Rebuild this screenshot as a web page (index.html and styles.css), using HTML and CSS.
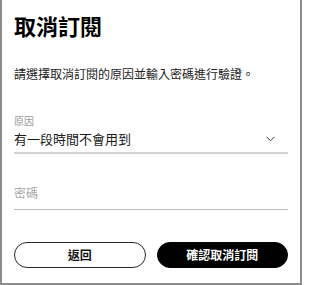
FILE: index.html
```html
<!DOCTYPE html>
<html lang="zh-Hant">
<head>
<meta charset="utf-8">
<link rel="stylesheet" href="styles.css">
</head>
<body>
<div class="dialog">
  <h1 class="title">取消訂閱</h1>
  <p class="desc">請選擇取消訂閱的原因並輸入密碼進行驗證。</p>
  <div class="field">
    <div class="label">原因</div>
    <div class="select">
      <span class="value">有一段時間不會用到</span>
      <svg class="chev" width="9" height="6" viewBox="0 0 9 6"><path d="M0.5 0.8 L4.5 4.8 L8.5 0.8" fill="none" stroke="#333" stroke-width="1"/></svg>
    </div>
  </div>
  <div class="pw">
    <input class="pw-input" type="password" placeholder="密碼">
  </div>
  <div class="actions">
    <button class="btn btn-outline">返回</button>
    <button class="btn btn-solid">確認取消訂閱</button>
  </div>
</div>
</body>
</html>
```
FILE: styles.css
```css
* { box-sizing: border-box; }
html, body { margin: 0; padding: 0; background: #fff; }
body { font-family: "Noto Sans CJK TC", "Noto Sans", sans-serif; }
.dialog {
  width: 302px;
  height: 285px;
  border: 2px solid #8c8c8c;
  border-top: 0;
  padding: 0 12px;
  display: flex;
  flex-direction: column;
}
.title {
  margin: 10px 0 0;
  font-size: 22px;
  line-height: 30px;
  font-weight: 700;
  color: #000;
}
.desc {
  margin: 25px 0 0;
  font-size: 12px;
  line-height: 18px;
  color: #222;
}
.field { margin-top: 31px; }
.label {
  font-size: 10px;
  line-height: 14px;
  color: #9a9a9a;
}
.select {
  margin-top: 1px;
  display: flex;
  align-items: center;
  justify-content: space-between;
  height: 25px;
  padding: 0 13px 4px 0;
  border-bottom: 2px solid #d2d2d2;
  box-sizing: content-box;
  height: 19px;
}
.value {
  font-size: 13px;
  line-height: 19px;
  color: #1a1a1a;
}
.chev { display: block; }
.pw {
  margin-top: 30px;
  border-bottom: 1px solid #bdbdbd;
  padding-bottom: 7px;
}
.pw-input {
  display: block;
  width: 100%;
  border: 0;
  outline: 0;
  padding: 0;
  margin: 0;
  font-family: inherit;
  font-size: 12px;
  line-height: 18px;
  height: 18px;
  background: transparent;
}
.pw-input::placeholder { color: #a8a8a8; }
.actions {
  margin-top: 32px;
  display: flex;
  gap: 11px;
}
.btn {
  flex: 1;
  height: 26px;
  border-radius: 13px;
  font-family: inherit;
  font-size: 12px;
  font-weight: 700;
  padding: 0;
  line-height: 24px;
}
.btn-outline {
  background: #fff;
  border: 1px solid #2a2a2a;
  color: #111;
}
.btn-solid {
  background: #000;
  border: 1px solid #000;
  color: #fff;
}
```
